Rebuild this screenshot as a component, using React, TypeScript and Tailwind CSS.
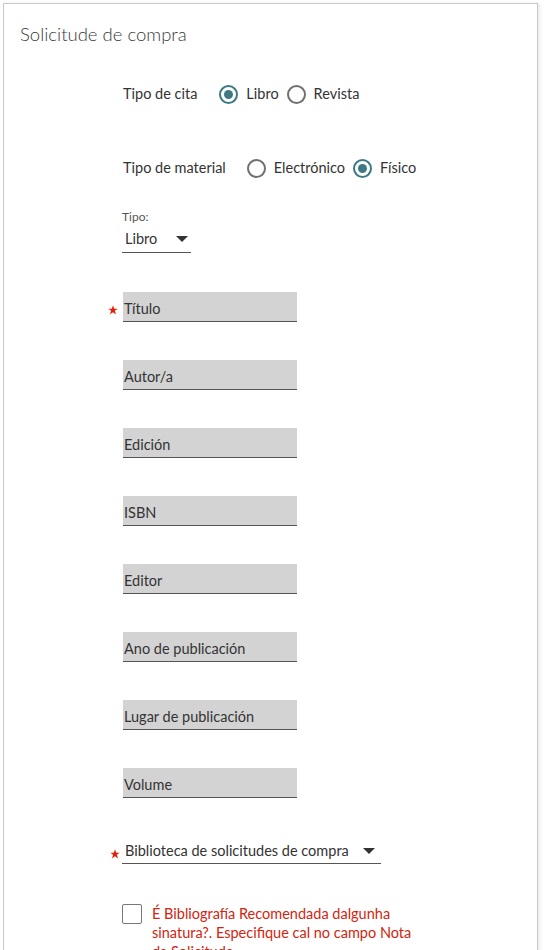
import React from "react";

const font = { fontFamily: "Lato, 'Open Sans', sans-serif" };

function Radio({ checked, label }: { checked?: boolean; label: string }) {
  return (
    <label className="flex items-center gap-[8px]">
      <span
        className={
          checked
            ? "flex h-[19px] w-[19px] items-center justify-center rounded-full border-2 border-[#3d7883]"
            : "flex h-[19px] w-[19px] items-center justify-center rounded-full border-2 border-[#707070]"
        }
      >
        {checked && <span className="h-[9px] w-[9px] rounded-full bg-[#3d7883]" />}
      </span>
      <span>{label}</span>
    </label>
  );
}

function Caret() {
  return (
    <svg width="12" height="6" viewBox="0 0 12 6">
      <path d="M0 0h12L6 6z" fill="#333" />
    </svg>
  );
}

function Star({ className }: { className: string }) {
  return (
    <svg className={"absolute " + className} width="10" height="10" viewBox="0 0 10 10">
      <path d="M5 0.3l1.2 3.4h3.5L6.9 5.8l1.1 3.6L5 7.3 2 9.4l1.1-3.6L0.3 3.7h3.5z" fill="#e0210c" />
    </svg>
  );
}

function TextField({ label, required }: { label: string; required?: boolean }) {
  return (
    <div className="relative ml-[119px] mt-[38px] first:mt-0">
      {required && <Star className="left-[-15px] top-[13px]" />}
      <div className="flex h-[30px] w-[174px] items-end border-b border-[#555] bg-[#d3d3d3] pb-[2px] pl-[1px] text-[14.5px] leading-[20px] text-[#333]">
        {label}
      </div>
    </div>
  );
}

export default function App() {
  const fields = [
    "Autor/a",
    "Edición",
    "ISBN",
    "Editor",
    "Ano de publicación",
    "Lugar de publicación",
    "Volume",
  ];
  return (
    <div className="h-[950px] w-[545px] overflow-hidden bg-white" style={font}>
      <div className="ml-[3px] mt-[3px] h-[1000px] w-[535px] border border-[#c9c9c9] bg-white shadow-[2px_0_3px_rgba(0,0,0,0.08)]">
        <div className="pl-[16px] pt-[18px] text-[18.5px] font-light leading-[24px] text-[#3a3a3a]">
          Solicitude de compra
        </div>

        <div className="ml-[119px] mt-[36px] flex h-[24px] items-center text-[14.5px] text-[#333]">
          <span className="mr-[22px]">Tipo de cita</span>
          <div className="flex items-center gap-[8px]">
            <Radio checked label="Libro" />
            <Radio label="Revista" />
          </div>
        </div>

        <div className="ml-[119px] mt-[50px] flex h-[24px] items-center text-[14.5px] text-[#333]">
          <span className="mr-[21px]">Tipo de material</span>
          <div className="flex items-center gap-[8px]">
            <Radio label="Electrónico" />
            <Radio checked label="Físico" />
          </div>
        </div>

        <div className="ml-[118px] mt-[29px] w-[69px]">
          <div className="text-[12px] leading-[16px] text-[#555]">Tipo:</div>
          <div className="mt-[4px] flex items-center justify-between border-b border-[#555] pb-[3px] pl-[3px] pr-[3px] text-[14.5px] leading-[20px] text-[#333]">
            <span>Libro</span>
            <Caret />
          </div>
        </div>

        <div className="mt-[39px] flex flex-col">
          <TextField label="Título" required />
          {fields.map((f) => (
            <TextField key={f} label={f} />
          ))}
        </div>

        <div className="relative ml-[118px] mt-[43px] w-[259px]">
          <Star className="left-[-12px] top-[8px]" />
          <div className="flex items-center justify-between border-b border-[#555] pb-[2px] pl-[3px] pr-[6px] text-[14.5px] leading-[20px] text-[#333]">
            <span>Biblioteca de solicitudes de compra</span>
            <Caret />
          </div>
        </div>

        <div className="ml-[118px] mt-[40px] flex items-start gap-[10px]">
          <span className="h-[20px] w-[20px] shrink-0 rounded-[2px] border border-[#777] bg-white" />
          <span className="w-[270px] text-[14.5px] leading-[19px] text-[#d3240f]">
            É Bibliografía Recomendada dalgunha sinatura?. Especifique cal no campo Nota da Solicitude.
          </span>
        </div>
      </div>
    </div>
  );
}
